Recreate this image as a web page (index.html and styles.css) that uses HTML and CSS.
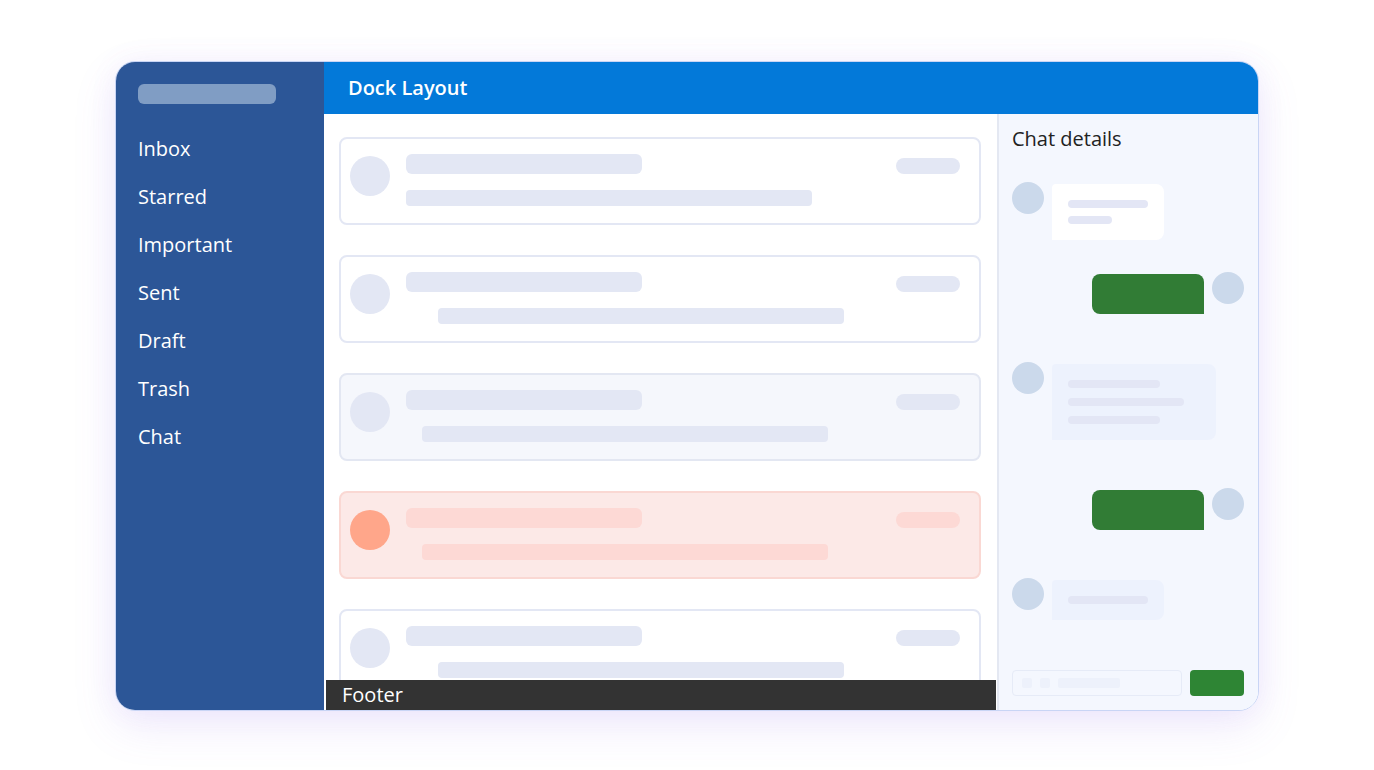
FILE: index.html
```html
<!DOCTYPE html>
<html lang="en">
<head>
<meta charset="utf-8">
<title>Dock Layout</title>
<link rel="stylesheet" href="styles.css">
</head>
<body>
<div class="page">
<div class="frame">
  <aside class="sidebar">
    <div class="logo"></div>
    <nav class="nav">
      <div class="nav-item">Inbox</div>
      <div class="nav-item">Starred</div>
      <div class="nav-item">Important</div>
      <div class="nav-item">Sent</div>
      <div class="nav-item">Draft</div>
      <div class="nav-item">Trash</div>
      <div class="nav-item">Chat</div>
    </nav>
  </aside>
  <div class="right">
    <header class="header">Dock Layout</header>
    <div class="body">
      <main class="main">
        <div class="list">
          <div class="card">
            <div class="avatar"></div>
            <div class="text">
              <div class="top"><div class="title"></div><div class="pill"></div></div>
              <div class="line"></div>
            </div>
          </div>
          <div class="card">
            <div class="avatar"></div>
            <div class="text">
              <div class="top"><div class="title"></div><div class="pill"></div></div>
              <div class="line indent-32"></div>
            </div>
          </div>
          <div class="card card-muted">
            <div class="avatar"></div>
            <div class="text">
              <div class="top"><div class="title"></div><div class="pill"></div></div>
              <div class="line indent-16"></div>
            </div>
          </div>
          <div class="card card-alert">
            <div class="avatar"></div>
            <div class="text">
              <div class="top"><div class="title"></div><div class="pill"></div></div>
              <div class="line indent-16"></div>
            </div>
          </div>
          <div class="card">
            <div class="avatar"></div>
            <div class="text">
              <div class="top"><div class="title"></div><div class="pill"></div></div>
              <div class="line indent-32"></div>
            </div>
          </div>
        </div>
        <footer class="footer">Footer</footer>
      </main>
      <section class="chat">
        <div class="chat-title">Chat details</div>
        <div class="msg msg-1">
          <div class="c-avatar"></div>
          <div class="bubble bubble-white">
            <div class="b-line w80"></div>
            <div class="b-line w44"></div>
          </div>
        </div>
        <div class="msg msg-out msg-2">
          <div class="bubble-green"></div>
          <div class="c-avatar"></div>
        </div>
        <div class="msg msg-3">
          <div class="c-avatar"></div>
          <div class="bubble bubble-soft wide">
            <div class="b-line w92"></div>
            <div class="b-line w116"></div>
            <div class="b-line w92"></div>
          </div>
        </div>
        <div class="msg msg-out msg-4">
          <div class="bubble-green"></div>
          <div class="c-avatar"></div>
        </div>
        <div class="msg msg-5">
          <div class="c-avatar"></div>
          <div class="bubble bubble-soft">
            <div class="b-line w80"></div>
          </div>
        </div>
        <div class="composer">
          <div class="input">
            <span class="sq"></span><span class="sq"></span><span class="ph"></span>
          </div>
          <div class="send"></div>
        </div>
      </section>
    </div>
  </div>
</div>
</div>
</body>
</html>
```

FILE: styles.css
```css
* { box-sizing: border-box; }
html, body { margin: 0; padding: 0; background: #ffffff; }
body { font-family: "Open Sans", "Noto Sans", sans-serif; }

.page {
  min-height: 770px;
  padding: 61px 0 0 115px;
}

.frame {
  width: 1144px;
  height: 650px;
  display: flex;
  border: 1px solid rgba(120, 150, 230, 0.4);
  border-radius: 20px;
  overflow: hidden;
  box-shadow: 0 16px 44px rgba(140, 100, 235, 0.13), 0 0 28px rgba(140, 100, 235, 0.07);
}

.sidebar {
  width: 208px;
  flex: none;
  background: #2c5697;
  padding: 22px 0 0 22px;
}
.logo {
  width: 138px;
  height: 20px;
  border-radius: 6px;
  background: #809dc4;
}
.nav { margin-top: 21px; }
.nav-item {
  height: 48px;
  line-height: 48px;
  color: #ffffff;
  font-size: 20px;
}

.right { flex: 1; display: flex; flex-direction: column; min-width: 0; }
.header {
  height: 52px;
  flex: none;
  background: #0379d9;
  color: #ffffff;
  font-size: 20px;
  font-weight: 600;
  line-height: 51px;
  padding-left: 24px;
}
.body { flex: 1; display: flex; min-height: 0; }

.main {
  width: 673px;
  flex: none;
  display: flex;
  flex-direction: column;
  background: #ffffff;
}
.list {
  flex: 1;
  overflow: hidden;
  padding: 23px 16px 0 15px;
  display: flex;
  flex-direction: column;
  gap: 30px;
}
.card {
  flex: none;
  height: 88px;
  border: 2px solid #e3e7f4;
  border-radius: 8px;
  background: #ffffff;
  display: flex;
  align-items: flex-start;
  gap: 16px;
  padding: 15px 19px 0 9px;
}
.avatar {
  width: 40px;
  height: 40px;
  margin-top: 2px;
  border-radius: 50%;
  background: #e3e7f4;
  flex: none;
}
.text { flex: 1; display: flex; flex-direction: column; gap: 16px; }
.top { display: flex; justify-content: space-between; align-items: flex-end; }
.title { width: 236px; height: 20px; border-radius: 6px; background: #e3e7f4; }
.pill { width: 64px; height: 16px; border-radius: 8px; background: #e3e7f4; }
.line { width: 406px; height: 16px; border-radius: 4px; background: #e3e7f4; }
.indent-16 { margin-left: 16px; }
.indent-32 { margin-left: 32px; }

.card-muted { background: #f5f7fc; border-color: #e3e7f2; }
.card-alert { background: #fce9e7; border-color: #fad8d3; }
.card-alert .avatar { background: #ffa68a; }
.card-alert .title, .card-alert .pill, .card-alert .line { background: #fdd9d5; }

.footer {
  height: 30px;
  flex: none;
  margin: 0 1px 0 2px;
  background: #333333;
  color: #ffffff;
  font-size: 20px;
  line-height: 30px;
  padding-left: 16px;
}

.chat {
  flex: 1;
  background: #f4f7fe;
  border-left: 2px solid #e4e8f2;
  padding: 12px 14px 14px 13px;
  display: flex;
  flex-direction: column;
}
.chat-title {
  font-size: 20px;
  line-height: 26px;
  color: #222222;
}
.msg { display: flex; align-items: flex-start; gap: 8px; }
.msg-out { justify-content: flex-end; }
.msg-1 { margin-top: 30px; }
.msg-2 { margin-top: 32px; }
.msg-3, .msg-4, .msg-5 { margin-top: 48px; }
.c-avatar {
  width: 32px;
  height: 32px;
  border-radius: 50%;
  background: #cbd9eb;
  flex: none;
}
.bubble {
  margin-top: 2px;
  width: 112px;
  padding: 16px;
  border-radius: 4px 8px 8px 0;
  display: flex;
  flex-direction: column;
  gap: 8px;
}
.bubble.wide { width: 164px; gap: 10px; }
.bubble-white { background: #ffffff; }
.bubble-soft { background: #edf2fd; }
.b-line { height: 8px; border-radius: 4px; background: #e3e6f5; }
.w44 { width: 44px; }
.w80 { width: 80px; }
.w92 { width: 92px; }
.w116 { width: 116px; }
.bubble-green {
  margin-top: 2px;
  width: 112px;
  height: 40px;
  border-radius: 8px 8px 0 8px;
  background: #317c35;
}

.composer {
  margin-top: auto;
  display: flex;
  gap: 8px;
}
.input {
  width: 170px;
  height: 26px;
  border: 1px solid #e6ebf7;
  border-radius: 4px;
  display: flex;
  align-items: center;
  gap: 8px;
  padding-left: 9px;
}
.sq { width: 10px; height: 10px; background: #edf1fb; border-radius: 2px; }
.ph { width: 62px; height: 10px; background: #edf1fb; border-radius: 2px; }
.send {
  width: 54px;
  height: 26px;
  border-radius: 4px;
  background: #2e8534;
}
```
